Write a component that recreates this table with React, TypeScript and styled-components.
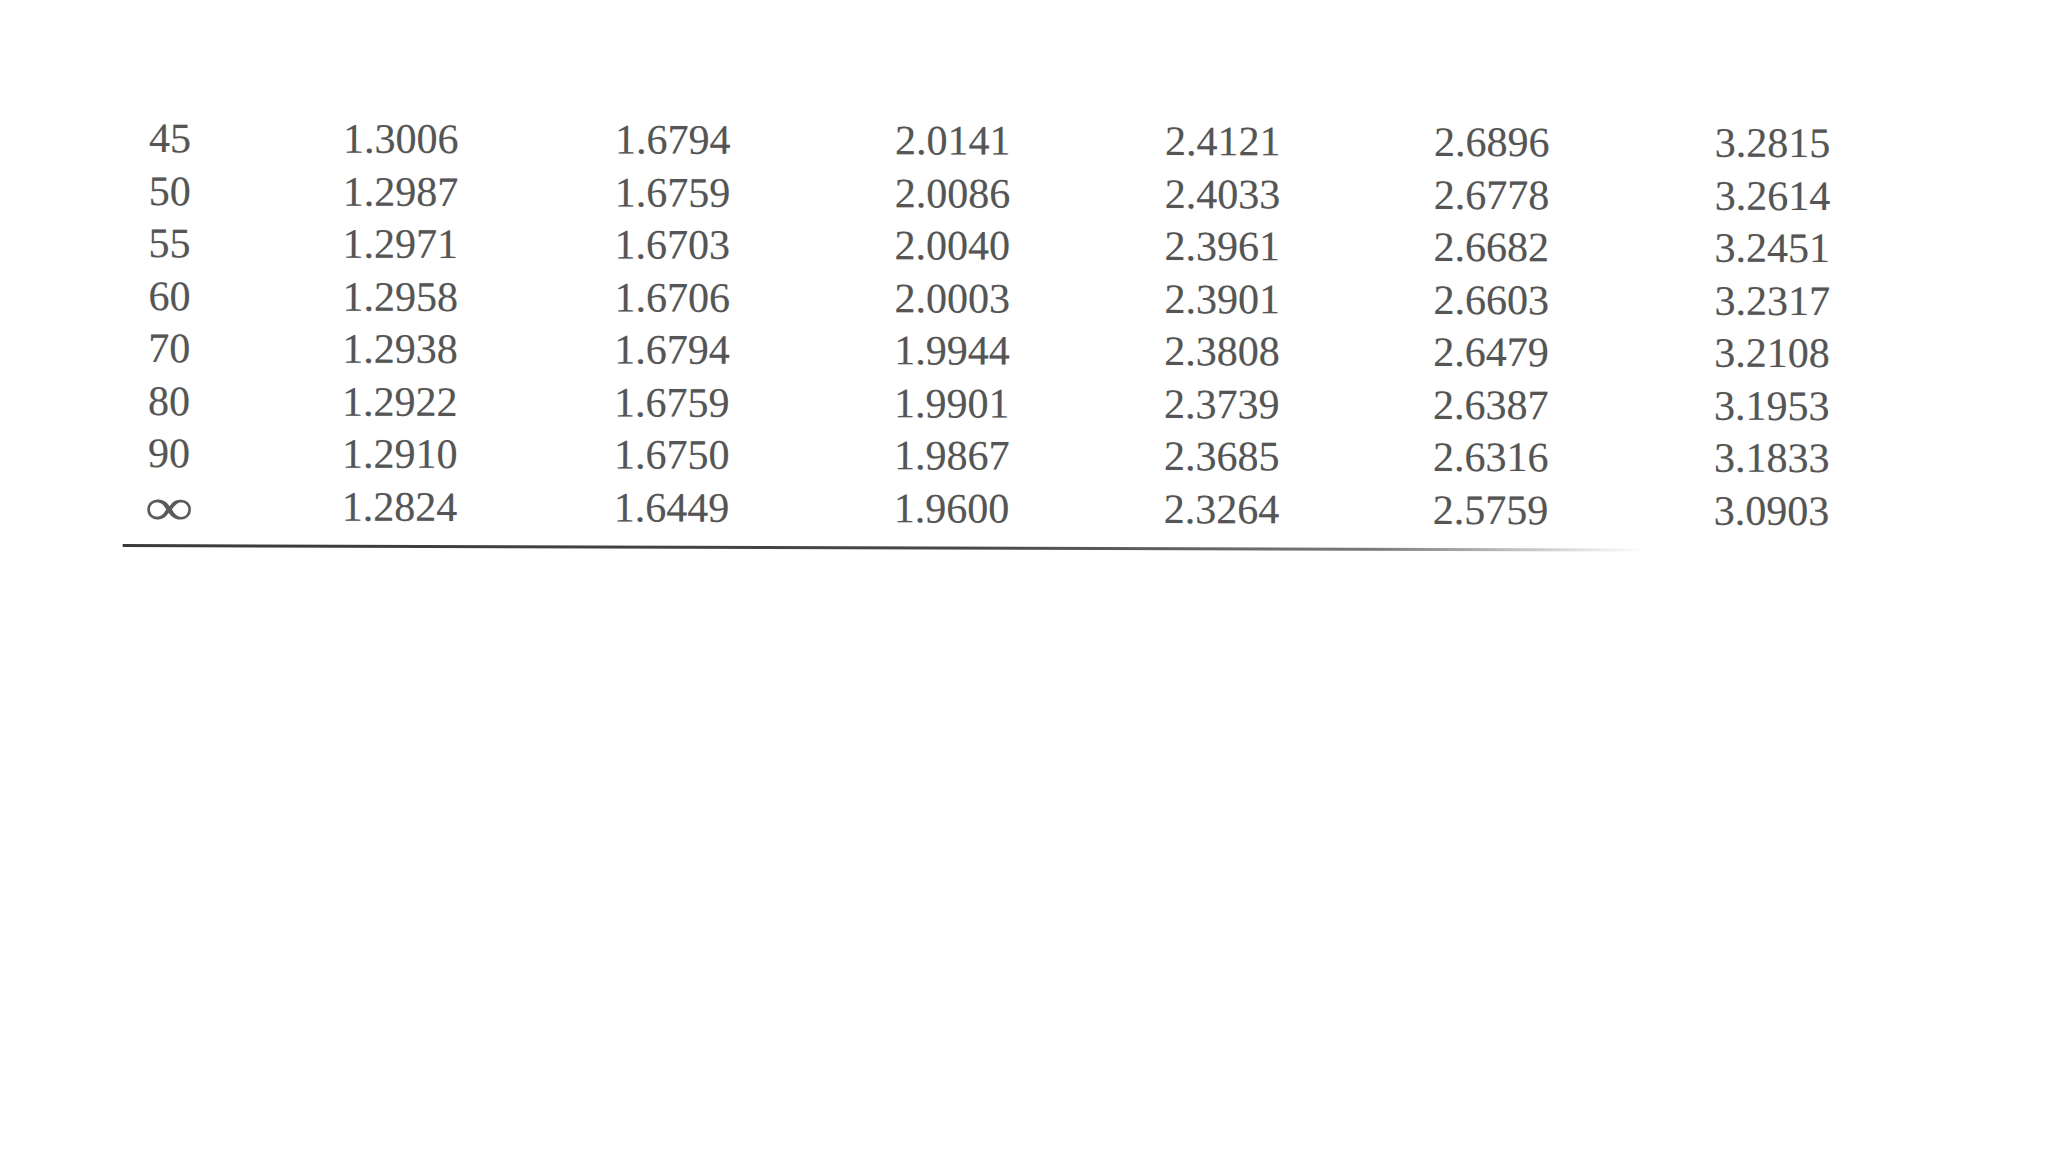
import styled, { createGlobalStyle } from 'styled-components';

const rows: string[][] = [
  ['45', '1.3006', '1.6794', '2.0141', '2.4121', '2.6896', '3.2815'],
  ['50', '1.2987', '1.6759', '2.0086', '2.4033', '2.6778', '3.2614'],
  ['55', '1.2971', '1.6703', '2.0040', '2.3961', '2.6682', '3.2451'],
  ['60', '1.2958', '1.6706', '2.0003', '2.3901', '2.6603', '3.2317'],
  ['70', '1.2938', '1.6794', '1.9944', '2.3808', '2.6479', '3.2108'],
  ['80', '1.2922', '1.6759', '1.9901', '2.3739', '2.6387', '3.1953'],
  ['90', '1.2910', '1.6750', '1.9867', '2.3685', '2.6316', '3.1833'],
  ['∞', '1.2824', '1.6449', '1.9600', '2.3264', '2.5759', '3.0903'],
];

const GlobalStyle = createGlobalStyle`
  html, body {
    margin: 0;
    background: #ffffff;
  }
`;

const App = () => (
  <Page>
    <GlobalStyle />
    <Table>
      <Grid>
        {rows.map((row) =>
          row.map((value, i) => (
            <Cell key={`${row[0]}-${i}`}>
              {value === '∞' ? <Infinity>∞</Infinity> : value}
            </Cell>
          ))
        )}
      </Grid>
      <Rule />
    </Table>
  </Page>
);

export default App;

const Page = styled.div`
  width: 2048px;
  height: 1152px;
  padding-top: 112px;
  box-sizing: border-box;
  background: #ffffff;
  overflow: hidden;
`;

const Table = styled.div`
  margin-left: 124px;
  width: 1522px;
  transform: rotate(0.17deg);
  transform-origin: left top;
`;

const Grid = styled.div`
  display: grid;
  grid-template-columns: 194px 272px 280px 270px 269px 281px 1fr;
  grid-auto-rows: 52.5px;
  padding-left: 25px;
  font-family: 'Liberation Serif', 'Times New Roman', serif;
  font-size: 42px;
  line-height: 52.5px;
  color: #555555;
`;

const Cell = styled.div`
  white-space: nowrap;
  text-shadow: 0 0 1px rgba(90, 90, 90, 0.3);
`;

const Infinity = styled.span`
  display: inline-block;
  font-size: 60px;
  line-height: 0;
  margin-left: -3px;
  transform-origin: left center;
  transform: translateY(7px) scale(1.14, 0.88);
  color: #5a5a5a;
`;

const Rule = styled.div`
  margin-top: 12px;
  height: 3px;
  background: linear-gradient(
    to right,
    #3a3a3a 0%,
    #474747 55%,
    #7a7a7a 82%,
    rgba(200, 200, 200, 0) 100%
  );
`;
